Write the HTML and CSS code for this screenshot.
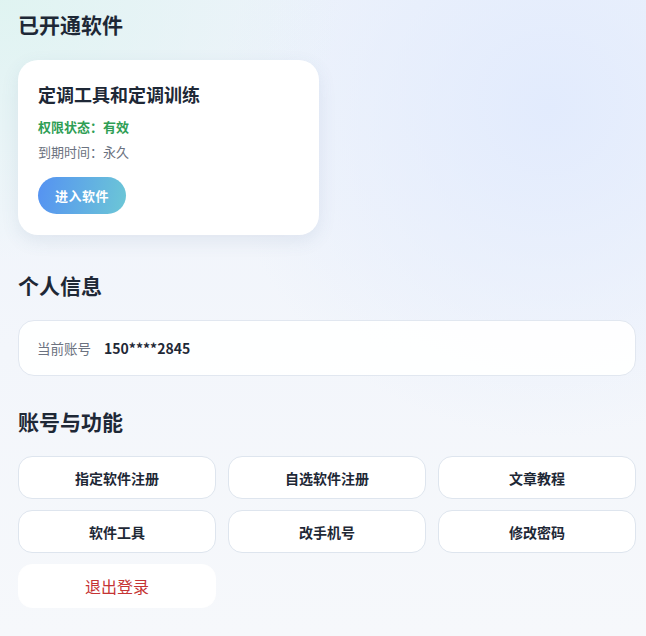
FILE: index.html
```html
<!DOCTYPE html>
<html lang="zh-CN">
<head>
<meta charset="utf-8">
<title>用户中心</title>
<link rel="stylesheet" href="styles.css">
</head>
<body>
<main class="page">
  <section class="section section-software">
    <h2 class="section-title">已开通软件</h2>
    <div class="software-grid">
      <div class="software-card">
        <h3 class="software-name">定调工具和定调训练</h3>
        <p class="status">权限状态：有效</p>
        <p class="expire">到期时间：永久</p>
        <button class="enter-btn">进入软件</button>
      </div>
    </div>
  </section>

  <section class="section section-info">
    <h2 class="section-title">个人信息</h2>
    <div class="info-card">
      <span class="info-label">当前账号</span>
      <span class="info-value">150****2845</span>
    </div>
  </section>

  <section class="section section-actions">
    <h2 class="section-title">账号与功能</h2>
    <div class="action-grid">
      <button class="action-btn">指定软件注册</button>
      <button class="action-btn">自选软件注册</button>
      <button class="action-btn">文章教程</button>
      <button class="action-btn">软件工具</button>
      <button class="action-btn">改手机号</button>
      <button class="action-btn">修改密码</button>
      <button class="action-btn logout-btn">退出登录</button>
    </div>
  </section>
</main>
</body>
</html>
```

FILE: styles.css
```css
* { box-sizing: border-box; }

html, body {
  margin: 0;
  padding: 0;
  min-height: 100%;
}

body {
  font-family: "Noto Sans CJK SC", "Noto Sans", "Liberation Sans", sans-serif;
  color: #1f2937;
  background:
    radial-gradient(ellipse 340px 260px at 0% 0%, rgba(220, 244, 239, 0.8) 0, rgba(220, 244, 239, 0) 100%),
    radial-gradient(circle at 85% 17%, rgba(226, 235, 253, 1) 0, rgba(226, 235, 253, 0) 330px),
    linear-gradient(180deg, #eef3fb 0%, #f3f6fb 55%, #f6f8fb 100%);
  min-height: 636px;
}

.page {
  width: 618px;
  margin-left: 18px;
  padding-top: 11px;
}

.section-title {
  margin: 0 0 22px;
  font-size: 21px;
  line-height: 26px;
  font-weight: 700;
  color: #1e2836;
}

.section-software .section-title { margin-bottom: 23px; }
.section-software { margin-bottom: 37px; }
.section-info { margin-bottom: 32px; }

.software-grid {
  display: grid;
  grid-template-columns: 301px;
}

.software-card {
  background: #fff;
  border-radius: 20px;
  padding: 20px 20px 21px;
  box-shadow: 0 6px 18px rgba(70, 100, 140, 0.10);
}

.software-name {
  margin: 0;
  font-size: 18px;
  line-height: 28px;
  font-weight: 700;
  color: #1e2836;
}

.status {
  margin: 9px 0 0;
  font-size: 13px;
  line-height: 20px;
  font-weight: 700;
  color: #2f9e55;
}

.expire {
  margin: 5px 0 0;
  font-size: 13px;
  line-height: 20px;
  color: #6b7280;
}

.enter-btn {
  margin-top: 15px;
  height: 37px;
  padding: 0 17px;
  border: none;
  border-radius: 19px;
  background: linear-gradient(100deg, #5592f2 0%, #6cc7d6 100%);
  color: #fff;
  font-family: inherit;
  font-size: 13px;
  font-weight: 700;
  letter-spacing: 0.5px;
  cursor: pointer;
}

.info-card {
  display: flex;
  align-items: center;
  gap: 13px;
  height: 56px;
  padding: 0 18px;
  background: rgba(255, 255, 255, 0.92);
  border: 1px solid #e1e7f0;
  border-radius: 16px;
}

.info-label {
  font-size: 13.5px;
  color: #6b7280;
}

.info-value {
  font-size: 14px;
  font-weight: 700;
  color: #1e2836;
}

.action-grid {
  display: grid;
  grid-template-columns: repeat(3, 1fr);
  column-gap: 12px;
  row-gap: 11px;
}

.action-btn {
  height: 43px;
  background: #fff;
  border: 1px solid #dee5ee;
  border-radius: 14px;
  font-family: inherit;
  font-size: 14px;
  font-weight: 700;
  color: #1e2836;
  cursor: pointer;
}

.logout-btn {
  height: 44px;
  border-color: #fff;
  font-size: 16px;
  font-weight: 400;
  color: #c53434;
}
```
